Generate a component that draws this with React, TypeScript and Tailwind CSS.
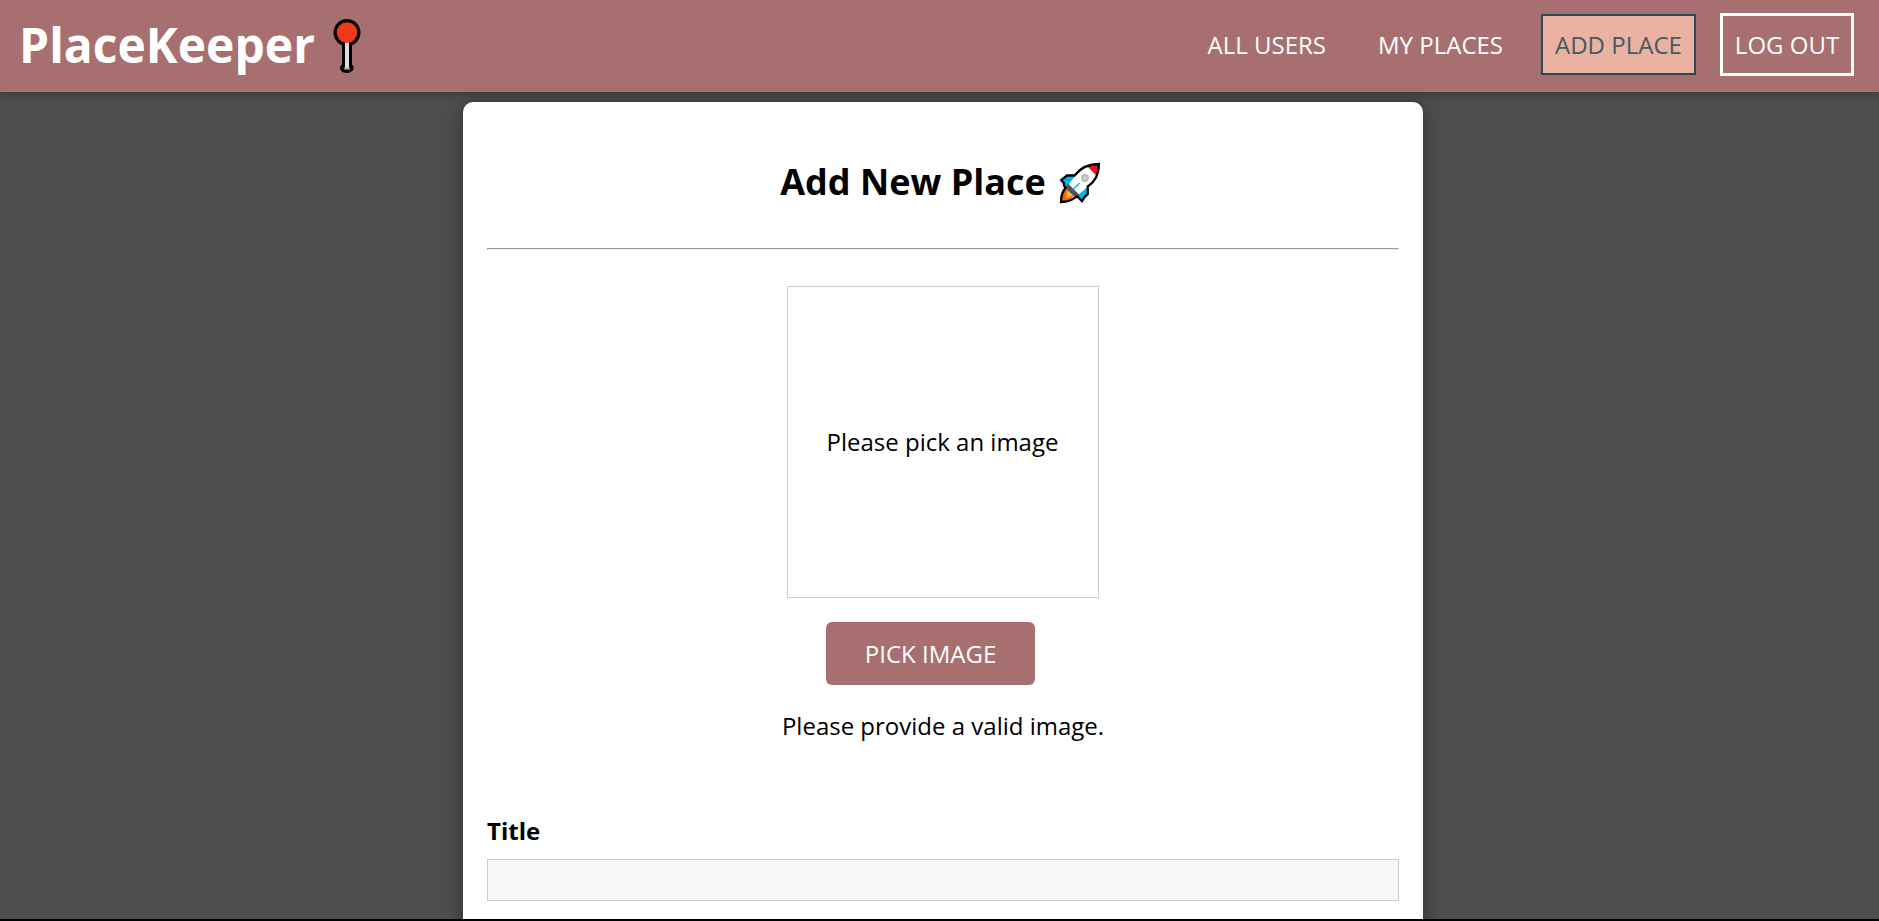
import React from "react";

function PinIcon() {
  return (
    <svg className="ml-[16px] mt-[19px] h-[54px] w-[28px] shrink-0" viewBox="0 0 28 54">
      <circle cx="14" cy="13.6" r="13.5" fill="#000" />
      <path d="M9 24h10v21.5c1 .8 1.600 1.900 1.600 3.300 0 3.200-3 5.200-6.800 5.200S7 52 7 48.800c0-1.400.9-2.500 2-3.300z" fill="#000" />
      <path d="M12 22h4v28h-4z" fill="#dedede" />
      <ellipse cx="14" cy="49.600" rx="3.400" ry="1.400" fill="#8e8e8e" />
      <path d="M12.400 46h3.200v3.200h-3.200z" fill="#dedede" />
      <circle cx="14" cy="13.600" r="10.300" fill="#f03a17" />
    </svg>
  );
}

function RocketIcon() {
  return (
    <svg className="ml-[13px] mt-[5px] h-[42px] w-[42px] shrink-0" viewBox="0 0 42 42">
      <path d="M2.500 18.500 8 14h9L28 26v7.500l-5 5-4.500-4.500L7 24z" fill="#00b7f1" />
      <path d="M7.500 26.500 14.500 34c-2.500 3.500-6 5.300-12.500 5.800C2 34 3.500 29 7.500 26.500z" fill="#f7630c" />
      <path d="M9 28.500l4.500 4.500c-1.500 2-3.500 3-6.500 3 0-3.200.5-5.500 2-7.500z" fill="#ffb52e" />
      <path d="M40 2c-13 0-20 6.500-25 13.500L9.500 22.500 19.500 32.500l8.500-7C34.500 20.500 40 15 40 2z" fill="#fff" />
      <path d="M9.200 21.800 20.700 33.300 17 36 6 25.500z" fill="#4d5257" />
      <path d="M40 2c-4.700 0-8.300.8-11.800 2.300L37.800 14C39.200 10.800 40 7 40 2z" fill="#e81224" />
      <circle cx="26" cy="16" r="3.900" fill="#b5b5b5" />
      <circle cx="26" cy="16" r="2.500" fill="#cccccc" />
      <path d="M14 27.500 20.500 21" stroke="#00b7f1" strokeWidth="1.500" />
      <path
        d="M40 2c-12.500 0-19.500 5-24.500 11.500H8L2.200 18.200 4.800 21l.2 2.500 1.500 2.200C3.500 29.500 2 33.500 2 40c6.500 0 11-1.500 14.500-5H19l4 4.200 2.500-4 3.200-3V24.500C35.500 20 40 14 40 2z"
        fill="none"
        stroke="#000"
        strokeWidth="2.300"
      />
    </svg>
  );
}

function Header() {
  return (
    <header className="relative z-10 flex h-[92px] shrink-0 items-start justify-between bg-[#a76f6f] pr-[25px] pl-[19px] text-white shadow-[0_2px_8px_rgba(0,0,0,0.26)]">
      <div className="flex">
        <h1 className="mt-[12px] w-[298px] text-[48px] leading-[65px] font-bold whitespace-nowrap">PlaceKeeper</h1>
        <PinIcon />
      </div>
      <nav className="flex h-[89px] items-center text-[24px] leading-[33px] whitespace-nowrap">
        <a className="mr-[52px]">ALL USERS</a>
        <a className="mr-[38px]">MY PLACES</a>
        <a className="mr-[24px] w-[155px] border-2 border-[#2f4858] bg-[#eab2a0] px-[12px] py-[12px] text-[#435b66]">
          ADD PLACE
        </a>
        <button className="w-[134px] border-3 border-white py-[12px]">LOG OUT</button>
      </nav>
    </header>
  );
}

export default function App() {
  return (
    <div className="flex h-[921px] flex-col overflow-hidden border-b-2 border-black bg-[#4d4d4d] font-['Open_Sans',sans-serif]">
      <Header />
      <main className="mt-[10px] ml-[463px] h-[1100px] w-[960px] shrink-0 rounded-[10px] bg-white px-6 pt-[55px] text-[24px] leading-[33px] text-black shadow-[0_2px_16px_rgba(0,0,0,0.4)]">
        <div className="flex h-[49px] justify-center pr-[5px]">
          <h2 className="text-[36px] leading-[49px] font-bold whitespace-nowrap">Add New Place</h2>
          <RocketIcon />
        </div>
        <hr className="mt-[42px] h-[2px] border border-t-[#9a9a9a] border-r-[#eeeeee] border-b-[#eeeeee] border-l-[#9a9a9a]" />
        <div className="mt-[36px] flex flex-col items-center">
          <div className="flex h-[312px] w-[312px] items-center justify-center border border-[#cccccc] pr-px pb-px">
            <p>Please pick an image</p>
          </div>
          <button className="mt-[24px] mr-[25px] h-[63px] w-[209px] rounded-[6px] bg-[#a76f6f] text-white">
            PICK IMAGE
          </button>
          <p className="mt-[24px]">Please provide a valid image.</p>
        </div>
        <label className="mt-[72px] block font-bold" htmlFor="title">
          Title
        </label>
        <input id="title" className="mt-[12px] block h-[42px] w-full border border-[#cccccc] bg-[#f8f8f8]" />
      </main>
    </div>
  );
}
